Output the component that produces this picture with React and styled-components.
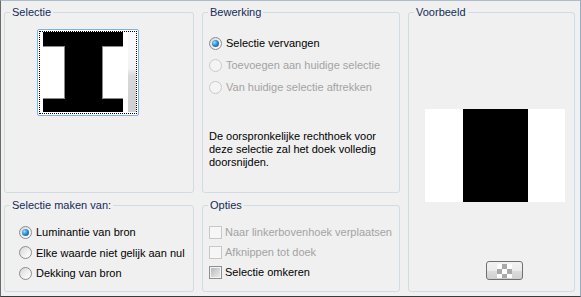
import React from "react";
import styled, { createGlobalStyle } from "styled-components";

const GlobalStyle = createGlobalStyle`
  * {
    box-sizing: border-box;
  }
  body {
    margin: 0;
    background: #f0f0f0;
  }
`;

const Dialog = styled.div`
  width: 581px;
  height: 297px;
  background: #f0f0f0;
  border-top: 1px solid #aebdcb;
  border-left: 1px solid #6a6a6a;
  border-right: 1px solid #94adc0;
  border-bottom: 1px solid #3a3a3a;
  padding: 5px 5px 0 3px;
  display: grid;
  grid-template-columns: 190px 198px 167px;
  grid-template-rows: 187px 93px;
  column-gap: 8px;
  row-gap: 6px;
  font-family: "Liberation Sans", Arial, sans-serif;
  font-size: 11px;
  color: #000;
`;

const Group = styled.fieldset`
  margin: 0;
  padding: 0;
  min-width: 0;
  border: 1px solid #d0dbe2;
  border-radius: 3px;
  grid-column: ${(p) => p.$col};
  grid-row: ${(p) => p.$row};
`;

const Legend = styled.legend`
  margin-left: 5px;
  padding: 0 2px;
  line-height: 13px;
  color: #142a58;
`;

const Thumb = styled.div`
  width: 102px;
  height: 87px;
  margin: 10px 0 0 32px;
  border: 1px solid #79b3e8;
  border-radius: 2px;
  padding: 1px;
  background: #fff;
`;

const FocusRect = styled.div`
  height: 100%;
  border: 1px dotted #000;
  padding-left: 3px;
  display: flex;
  gap: 5px;
`;

const Strip = styled.div`
  width: 8px;
  height: 80px;
  background: linear-gradient(
    to bottom,
    #fbfbfb 0%,
    #f3f3f3 45%,
    #d8d8d8 55%,
    #cfcfcf 100%
  );
`;

const List = styled.div`
  display: flex;
  flex-direction: column;
  margin-top: ${(p) => p.$top}px;
  padding-left: ${(p) => p.$left}px;
`;

const Row = styled.label`
  display: flex;
  align-items: center;
  gap: ${(p) => p.$gap || 4}px;
  height: ${(p) => p.$h}px;
  color: ${(p) => (p.$disabled ? "#a3a3a3" : "#000")};
  white-space: nowrap;
`;

const Radio = styled.span`
  position: relative;
  flex: none;
  width: 13px;
  height: 13px;
  border-radius: 50%;
  border: 1px solid ${(p) => (p.$disabled ? "#cacaca" : "#8c8c8c")};
  background: ${(p) =>
    p.$disabled
      ? "#f4f4f4"
      : "linear-gradient(135deg, #d6d6d6 0%, #f2f2f2 60%, #ffffff 100%)"};
  &::after {
    content: "";
    display: ${(p) => (p.$checked ? "block" : "none")};
    position: absolute;
    left: 2px;
    top: 2px;
    width: 7px;
    height: 7px;
    border-radius: 50%;
    background: radial-gradient(
      circle at 35% 35%,
      #9fdcff 0%,
      #2b8fd6 45%,
      #0a4f8f 100%
    );
  }
`;

const Check = styled.span`
  flex: none;
  width: 13px;
  height: 13px;
  border: 1px solid ${(p) => (p.$disabled ? "#c8c8c8" : "#8e8f8f")};
  background: ${(p) =>
    p.$disabled
      ? "#f6f6f6"
      : "linear-gradient(135deg, #aeb2b7 0%, #d8d9db 60%, #eeeeee 100%)"};
  box-shadow: inset 0 0 0 1px ${(p) => (p.$disabled ? "#f6f6f6" : "#f4f4f4")};
`;

const Note = styled.p`
  margin: 32px 0 0 6px;
  width: 180px;
  line-height: 13px;
`;

const Preview = styled.div`
  width: 140px;
  height: 93px;
  margin: 90px 0 0 16px;
  background: linear-gradient(
    to right,
    #fff 38px,
    #000 38px,
    #000 103px,
    #fff 103px
  );
`;

const AlphaButton = styled.button`
  display: flex;
  align-items: center;
  justify-content: center;
  width: 37px;
  height: 19px;
  margin: 59px 0 0 77px;
  padding: 0;
  border: 1px solid #707070;
  border-radius: 3px;
  background: linear-gradient(
    to bottom,
    #f2f2f2 0%,
    #ebebeb 50%,
    #dddddd 51%,
    #cfcfcf 100%
  );
`;

const Checker = styled.span`
  width: 15px;
  height: 14px;
  background: repeating-conic-gradient(#a9a9a9 0 25%, #ffffff 0 50%) 0 0 /
    10px 10px;
`;

function IShape() {
  return (
    <svg width="80" height="80" viewBox="0 0 80 80">
      <rect x="0" y="0" width="80" height="80" fill="#fff" />
      <rect x="0" y="0" width="80" height="14" fill="#000" />
      <rect x="22" y="14" width="37" height="53" fill="#000" />
      <rect x="0" y="67" width="80" height="13" fill="#000" />
      <g stroke="#8a8a8a" strokeWidth="1">
        <line x1="0" y1="14.5" x2="22" y2="14.5" />
        <line x1="59" y1="14.5" x2="80" y2="14.5" />
        <line x1="0" y1="66.5" x2="22" y2="66.5" />
        <line x1="59" y1="66.5" x2="80" y2="66.5" />
        <line x1="21.5" y1="15" x2="21.5" y2="66" />
        <line x1="59.5" y1="15" x2="59.5" y2="66" />
      </g>
    </svg>
  );
}

const operations = [
  { text: "Selectie vervangen", checked: true },
  { text: "Toevoegen aan huidige selectie", disabled: true },
  { text: "Van huidige selectie aftrekken", disabled: true },
];

const sources = [
  { text: "Luminantie van bron", checked: true },
  { text: "Elke waarde niet gelijk aan nul" },
  { text: "Dekking van bron" },
];

const options = [
  { text: "Naar linkerbovenhoek verplaatsen", disabled: true },
  { text: "Afknippen tot doek", disabled: true },
  { text: "Selectie omkeren" },
];

export default function App() {
  return (
    <>
      <GlobalStyle />
      <Dialog>
        <Group $col="1" $row="1">
          <Legend>Selectie</Legend>
          <Thumb>
            <FocusRect>
              <IShape />
              <Strip />
            </FocusRect>
          </Thumb>
        </Group>

        <Group $col="2" $row="1">
          <Legend>Bewerking</Legend>
          <List $top={13} $left={6}>
            {operations.map((o) => (
              <Row key={o.text} $h={22} $disabled={o.disabled}>
                <Radio $checked={o.checked} $disabled={o.disabled} />
                {o.text}
              </Row>
            ))}
          </List>
          <Note>
            De oorspronkelijke rechthoek voor deze selectie zal het doek
            volledig doorsnijden.
          </Note>
        </Group>

        <Group $col="3" $row="1 / span 2">
          <Legend>Voorbeeld</Legend>
          <Preview />
          <AlphaButton>
            <Checker />
          </AlphaButton>
        </Group>

        <Group $col="1" $row="2">
          <Legend>Selectie maken van:</Legend>
          <List $top={10} $left={14}>
            {sources.map((s) => (
              <Row key={s.text} $h={20.5}>
                <Radio $checked={s.checked} />
                {s.text}
              </Row>
            ))}
          </List>
        </Group>

        <Group $col="2" $row="2">
          <Legend>Opties</Legend>
          <List $top={10} $left={6}>
            {options.map((o) => (
              <Row key={o.text} $h={20} $gap={3} $disabled={o.disabled}>
                <Check $disabled={o.disabled} />
                {o.text}
              </Row>
            ))}
          </List>
        </Group>
      </Dialog>
    </>
  );
}
